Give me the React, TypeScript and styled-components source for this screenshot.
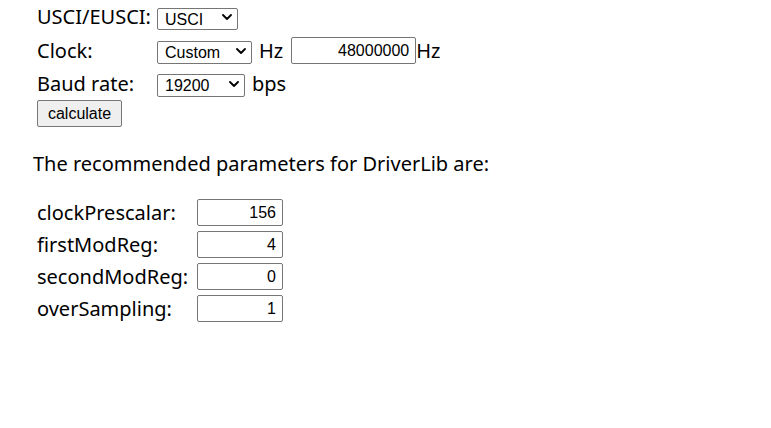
import React from 'react'
import styled, { createGlobalStyle } from 'styled-components'

const GlobalStyle = createGlobalStyle`
  body {
    margin: 0;
    background: #ffffff;
    color: #000000;
    font-family: "Noto Sans", "Open Sans", sans-serif;
  }
`

const Page = styled.div`
  padding-left: 33px;
  font-size: 20px;
  line-height: 24px;
`

const FormGrid = styled.div`
  display: grid;
  grid-template-columns: 120px auto;
  grid-template-rows: 34px 33px 33px 27px;
  align-items: center;
  margin-left: 4px;
`

const Label = styled.div`
  white-space: nowrap;
`

const Field = styled.div`
  display: flex;
  align-items: center;
`

const SelectWrap = styled.div<{ $width: number; $height?: number }>`
  position: relative;
  width: ${p => p.$width}px;
  height: ${p => p.$height ?? 23}px;
`

const Select = styled.select`
  appearance: none;
  -webkit-appearance: none;
  box-sizing: border-box;
  width: 100%;
  height: 100%;
  margin: 0;
  padding: 0 0 0 7px;
  border: 1px solid #767676;
  border-radius: 2px;
  background: #ffffff;
  color: #000000;
  font-family: "Liberation Sans", Arial, sans-serif;
  font-size: 16px;
  line-height: 21px;
`

const Chevron = styled.svg`
  position: absolute;
  right: 6px;
  top: 50%;
  margin-top: -3px;
  width: 10px;
  height: 6px;
  pointer-events: none;
`

const Unit = styled.span<{ $gap: number }>`
  margin-left: ${p => p.$gap}px;
`

const NumberInput = styled.input<{ $width: number; $gap?: number }>`
  box-sizing: border-box;
  width: ${p => p.$width}px;
  height: 27px;
  margin: 0 0 0 ${p => p.$gap ?? 0}px;
  padding: 0 6px 0 4px;
  border: 1px solid #767676;
  border-radius: 2px;
  background: #ffffff;
  color: #000000;
  text-align: right;
  font-family: "Liberation Sans", Arial, sans-serif;
  font-size: 16px;
`

const Button = styled.button`
  box-sizing: border-box;
  grid-column: 1 / span 2;
  width: 85px;
  height: 27px;
  margin: 0;
  padding: 0;
  border: 1px solid #767676;
  border-radius: 2px;
  background: #efefef;
  color: #000000;
  font-family: "Liberation Sans", Arial, sans-serif;
  font-size: 16px;
`

const Intro = styled.p`
  margin: 25px 0 0 0;
`

const ParamGrid = styled.div`
  display: grid;
  grid-template-columns: 160px auto;
  grid-auto-rows: 27px;
  row-gap: 5px;
  align-items: center;
  margin: 23px 0 0 4px;
`

const ChevronIcon = () => (
  <Chevron viewBox="0 0 10 6">
    <path d="M1 1 L5 5 L9 1" fill="none" stroke="#000" strokeWidth="1.8" strokeLinecap="round" strokeLinejoin="round" />
  </Chevron>
)

const params = [
  { name: 'clockPrescalar', value: '156' },
  { name: 'firstModReg', value: '4' },
  { name: 'secondModReg', value: '0' },
  { name: 'overSampling', value: '1' },
]

export default function App() {
  return (
    <Page>
      <GlobalStyle />
      <FormGrid>
        <Label>USCI/EUSCI:</Label>
        <Field>
          <SelectWrap $width={81} $height={22}>
            <Select defaultValue="USCI">
              <option>USCI</option>
              <option>EUSCI</option>
            </Select>
            <ChevronIcon />
          </SelectWrap>
        </Field>

        <Label>Clock:</Label>
        <Field>
          <SelectWrap $width={95}>
            <Select defaultValue="Custom">
              <option>Custom</option>
              <option>1MHz</option>
            </Select>
            <ChevronIcon />
          </SelectWrap>
          <Unit $gap={7}>Hz</Unit>
          <NumberInput $width={125} $gap={8} defaultValue="48000000" />
          <Unit $gap={0}>Hz</Unit>
        </Field>

        <Label>Baud rate:</Label>
        <Field>
          <SelectWrap $width={88}>
            <Select defaultValue="19200">
              <option>9600</option>
              <option>19200</option>
              <option>115200</option>
            </Select>
            <ChevronIcon />
          </SelectWrap>
          <Unit $gap={7}>bps</Unit>
        </Field>

        <Button>calculate</Button>
      </FormGrid>

      <Intro>The recommended parameters for DriverLib are:</Intro>

      <ParamGrid>
        {params.map(p => (
          <React.Fragment key={p.name}>
            <Label>{p.name}:</Label>
            <NumberInput $width={86} defaultValue={p.value} />
          </React.Fragment>
        ))}
      </ParamGrid>
    </Page>
  )
}
